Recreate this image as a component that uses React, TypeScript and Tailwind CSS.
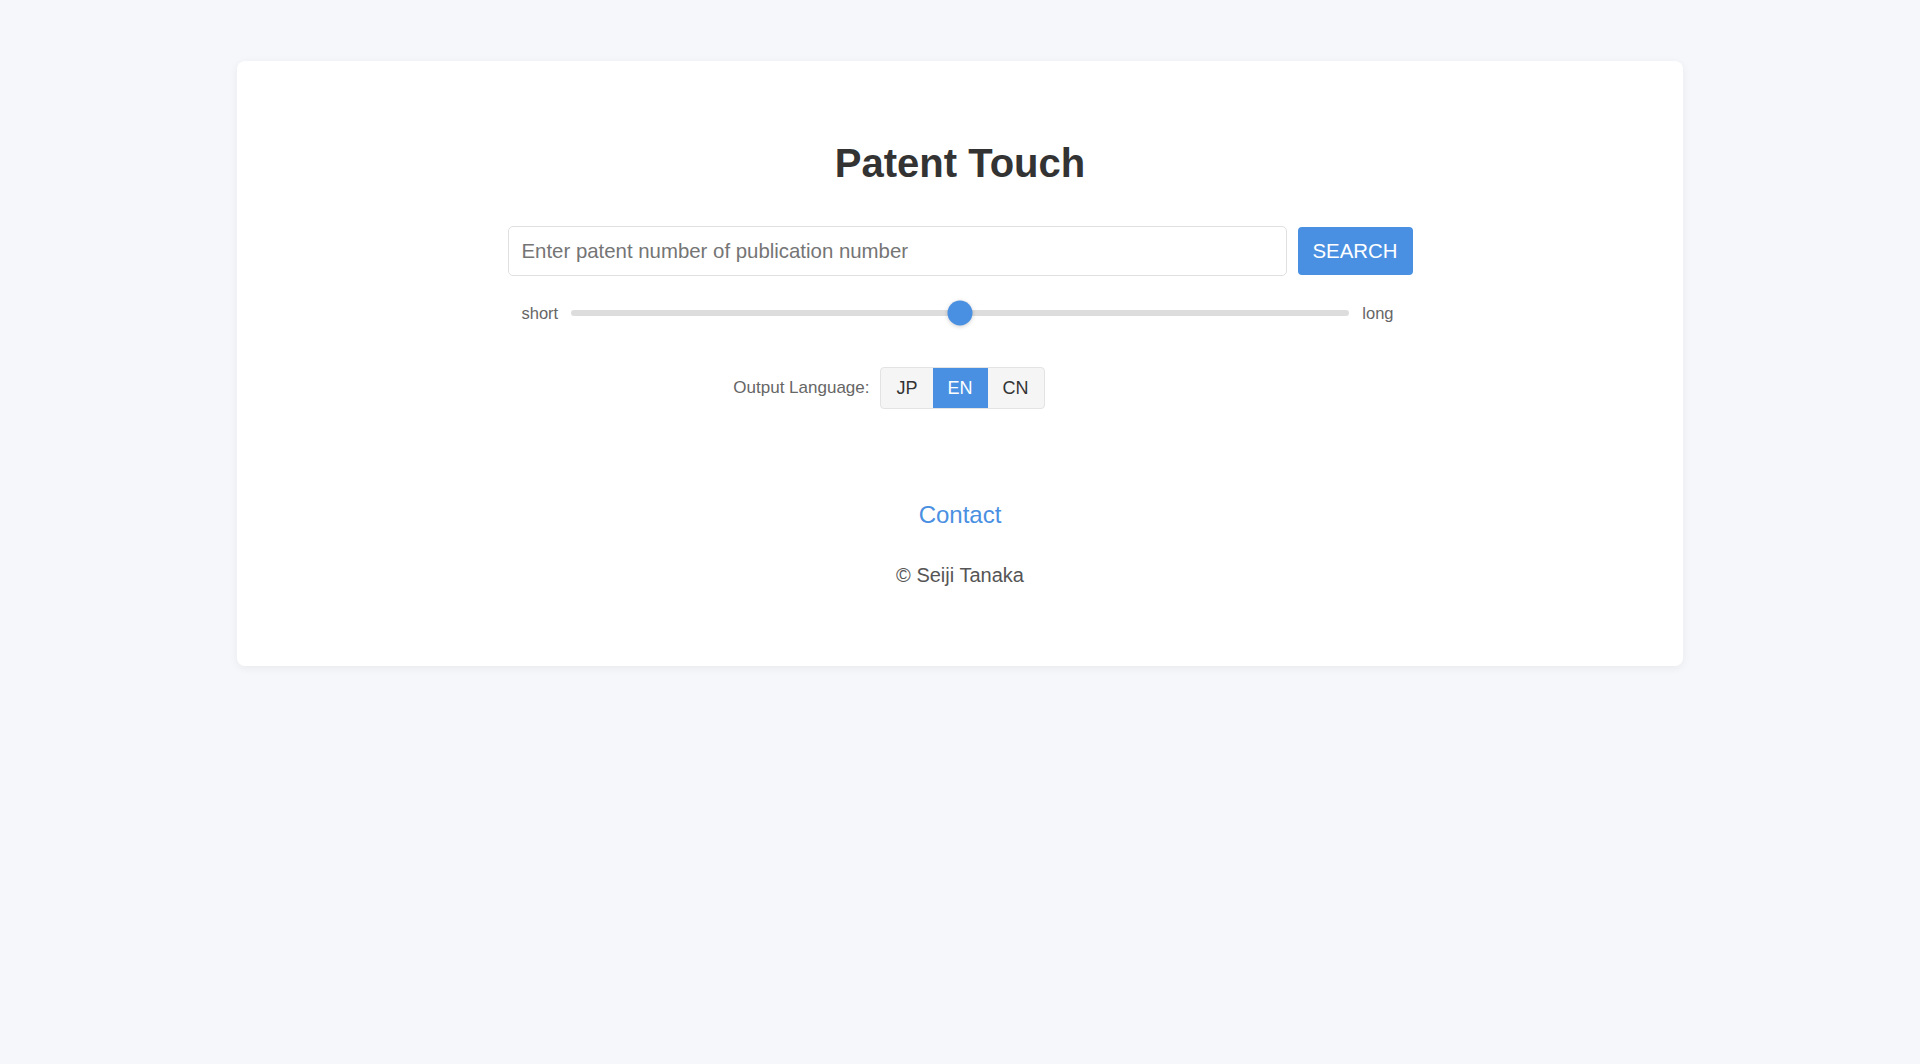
import React, { useState } from 'react';

const langs = ['JP', 'EN', 'CN'];

const App: React.FC = () => {
  const [query, setQuery] = useState('');
  const [lang, setLang] = useState('EN');
  const value = 50;

  return (
    <div className="min-h-screen bg-[#f5f7fa] pt-[61px] font-['Liberation_Sans',Arial,sans-serif]">
      <div className="mx-auto w-[1446px] rounded-lg bg-white pt-[78px] pb-[79px] shadow-[0_2px_10px_rgba(0,0,0,0.06)]">
        <h1 className="text-center text-[40px] leading-[48px] font-bold text-[#333]">Patent Touch</h1>

        {/* Search */}
        <div className="mx-auto mt-[39px] flex w-[905px] items-center gap-[11px]">
          <input
            value={query}
            onChange={(e) => setQuery(e.target.value)}
            placeholder="Enter patent number of publication number"
            className="h-[50px] flex-1 rounded-[5px] border border-[#e0e0e0] px-[13px] text-[20.4px] text-[#333] outline-none placeholder:text-[#757575]"
          />
          <button className="h-[48px] w-[115px] rounded-[4px] bg-[#4a90e2] text-[20.4px] text-white">SEARCH</button>
        </div>

        {/* Length slider */}
        <div className="mx-auto mt-[24px] flex h-[26px] w-[905px] items-center gap-[13px] pl-[14px] pr-[19px] text-[16.5px] text-[#666]">
          <span>short</span>
          <div className="relative h-[6px] flex-1 rounded-full bg-[#dddddd]">
            <div
              className="absolute top-1/2 h-[25px] w-[25px] -translate-x-1/2 -translate-y-1/2 rounded-full bg-[#4a90e2] shadow-[0_1px_4px_rgba(0,0,0,0.2)]"
              style={{ left: `${value}%` }}
            />
          </div>
          <span>long</span>
        </div>

        {/* Output language */}
        <div className="mt-[41px] grid grid-cols-[1fr_auto_1fr] items-center">
          <span className="justify-self-end pr-[6px] text-[17px] text-[#666]">Output Language:</span>
          <div className="ml-[5px] flex h-[42px] overflow-hidden rounded-[4px] border border-[#e3e3e3] bg-[#f5f5f5]">
            {langs.map((l) => (
              <button
                key={l}
                onClick={() => setLang(l)}
                className={`px-[15px] text-[18px] ${lang === l ? 'bg-[#4a90e2] text-white' : 'text-[#333]'}`}
              >
                {l}
              </button>
            ))}
          </div>
          <span />
        </div>

        <div className="mt-[91px] text-center">
          <a href="#" className="text-[24px] leading-[30px] text-[#4a90e2]">Contact</a>
        </div>
        <p className="mt-[33px] text-center text-[20px] leading-[24px] text-[#555]">© Seiji Tanaka</p>
      </div>
    </div>
  );
};

export default App;
